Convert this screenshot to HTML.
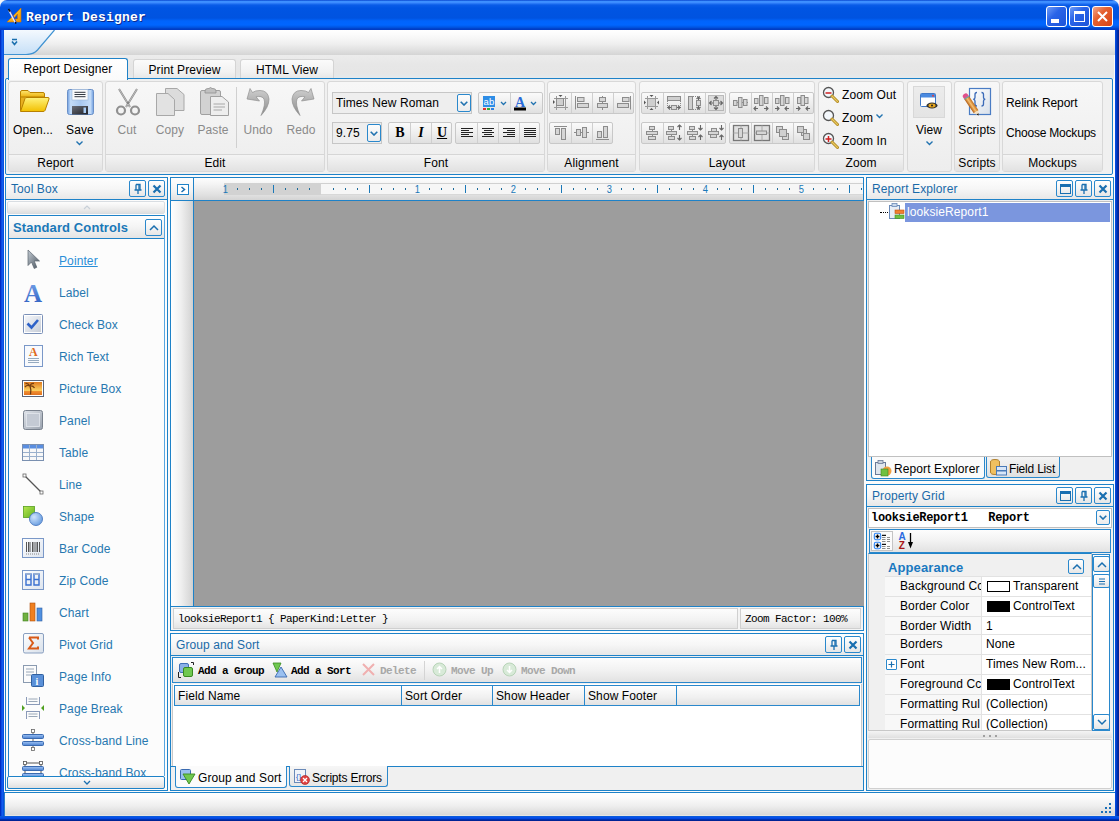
<!DOCTYPE html>
<html><head><meta charset="utf-8">
<style>
*{box-sizing:border-box;margin:0;padding:0}
html,body{width:1119px;height:821px;overflow:hidden}
body{position:relative;background:#0a4ad8;font-family:"Liberation Sans",sans-serif;font-size:12px;color:#000;letter-spacing:0.1px}
.a{position:absolute}
svg{display:block}
#title{left:0;top:0;width:1119px;height:30px;background:linear-gradient(#0846d0 0px,#3d90ff 1.5px,#3d8cff 2.5px,#0a5ce8 5px,#0055e3 8px,#0053e0 18px,#0064fc 21px,#0066ff 25px,#0052de 27.5px,#003cc4 29px,#003cc4 30px);border-radius:7px 7px 0 0}
#title .t{left:26px;top:10px;font-family:"Liberation Mono",monospace;font-weight:bold;font-size:13px;color:#fff;text-shadow:1px 1px 0 #0a2a90;white-space:nowrap;letter-spacing:0.2px}
.wb{top:6px;width:21px;height:21px;border:1px solid #fff;border-radius:3px;background:linear-gradient(135deg,#6f9cf7,#2a64e8 40%,#1d54d8)}
#qat{left:4px;top:30px;width:1111px;height:25px;background:linear-gradient(#ffffff,#fbfbfb 20%,#efefef 55%,#dcdcdc 88%,#d4d4d4)}
#tabrow{left:4px;top:55px;width:1110px;height:24px;background:linear-gradient(#ececec,#e7e7e7 40%,#e6e6e6 75%,#e4eaee)}
.tab{top:4px;height:20px;border:1px solid #d4d4d4;border-bottom:none;border-radius:3px 3px 0 0;background:linear-gradient(#fbfbfb,#f2f2f2 60%,#e6e6e6);text-align:center;line-height:21px;font-size:12px}
.tab.act{top:3px;height:22px;border-color:#1e82c8;background:linear-gradient(#ffffff,#fafafa);z-index:2}
#ribbon{left:5px;top:78px;width:1108px;height:97px;border:1px solid #1e82c8;border-radius:2px;background:#f0f0f0}
.grp{top:3px;height:90px;border:1px solid #d8d8d8;border-radius:3px;background:linear-gradient(#f7f7f7,#ededed)}
.grp .lbl{position:absolute;left:0;right:0;bottom:0;height:17px;border-top:1px solid #d6d6d6;background:linear-gradient(#f4f4f4,#e2e2e2);text-align:center;font-size:12px;line-height:17px;color:#000}
#status{left:4px;top:792px;width:1111px;height:24px;border-top:1px solid #1e82c8;border-left:1px solid #2a80c8;background:linear-gradient(#ffffff,#fbfbfb 20%,#efefef 55%,#d8d8d8 95%,#eeeeee)}
#main{left:4px;top:175px;width:1111px;height:617px;background:#f0f0f0}
.rt{font-size:12px;line-height:14px;white-space:nowrap}
.combo{border:1px solid #c6c6c6;background:#eeeeee}
.ddb{width:14px;height:18px;border:1px solid #2a88cc;border-radius:2px;background:linear-gradient(#fcfcfc,#ececec)}
.bseg{border:1px solid #c8c8c8;border-radius:2px;background:linear-gradient(#fafafa,#ececec 60%,#e0e0e0)}
.pnl{border:1px solid #1e82c8;background:#fcfcfc}
.phdr{background:linear-gradient(#fefefe,#f6f6f6 50%,#e6e6e6)}
.ptitle{font-size:12px;color:#1a6aa8;white-space:nowrap}
.hb{width:17px;height:17px;border:1px solid #2a88cc;border-radius:2px;background:linear-gradient(#fff,#f4f4f4 50%,#e6e6e6)}
.sbtn{border:1px solid #d8dde2;border-radius:2px;background:linear-gradient(#fdfdfd,#f0f0f0 50%,#e0e0e0)}
.ghdr{background:linear-gradient(#fefefe,#f4f4f4 50%,#e4e4e4)}
.tbi{font-size:12px;line-height:16px;color:#2778b0;white-space:nowrap}
.rlab{font-size:11px;line-height:12px;color:#1a78b8;width:9px;text-align:center;transform:scaleX(0.85)}
.sstrip{border:1px solid #d0d0d0;background:linear-gradient(#fdfdfd,#f2f2f2 60%,#e4e4e4)}
.mono{font-family:"Liberation Mono",monospace;font-size:11px;white-space:nowrap;letter-spacing:-0.6px}
.monob{font-family:"Liberation Mono",monospace;font-size:11px;font-weight:bold;white-space:nowrap;letter-spacing:-0.6px}
.gstb{border:1px solid #2a88cc;background:linear-gradient(#fdfdfd,#f2f2f2 50%,#e2e2e2)}
.gcol{border:1px solid #2a88cc;border-left:none;background:linear-gradient(#fefefe,#f0f0f0 60%,#e2e2e2);white-space:nowrap}
.btab{border:1px solid #2a88cc;border-top:none;border-radius:0 0 3px 3px;background:linear-gradient(#f6f6f6,#e6e6e6)}
.btab.act{background:#fbfbfb}

</style></head><body>
<div class="a" style="left:0;top:0;width:8px;height:8px;background:#f4f6fa"></div>
<div class="a" style="left:1111px;top:0;width:8px;height:8px;background:#f4f6fa"></div>
<div class="a" style="left:0;top:8px;width:4px;height:813px;background:linear-gradient(90deg,#0028b8 0,#0034d0 1px,#1664f4 2px,#0a56e6 3px,#0a4ad8 4px)"></div>
<div class="a" style="left:1115px;top:8px;width:4px;height:813px;background:linear-gradient(90deg,#0a50e0 0,#0044d8 1px,#0034b8 2px,#00289c 3px,#002090 4px)"></div>
<div class="a" style="left:0;top:816px;width:1119px;height:5px;background:linear-gradient(#0a64c8 0,#0a52ee 1px,#0048e0 2.5px,#0030b0 3.5px,#001c88 5px)"></div>
<div id="bgfill" class="a" style="left:4px;top:55px;width:1111px;height:737px;background:#fbfbfb"></div>
<div id="title" class="a">
  <svg class="a" style="left:0px;top:0px" width="24" height="24" viewBox="0 0 24 24">
<defs><linearGradient id="tig" x1="0" y1="0" x2="1" y2="1"><stop offset="0" stop-color="#ffe040"/><stop offset="1" stop-color="#f09000"/></linearGradient></defs>
<path d="M21 8 L7 22 L21 22 Z M17.5 14 L13.2 19 L17.5 19 Z" fill="url(#tig)" fill-rule="evenodd" stroke="#d07000" stroke-width="0.6"/>
<path d="M9 10 L15.5 22.5" stroke="#e8e8ff" stroke-width="1.8"/>
<path d="M10 10 L16.2 22" stroke="#2030a0" stroke-width="0.8"/>
<path d="M8.5 9 L10 11.5" stroke="#111" stroke-width="1.6"/>
<path d="M15.3 22 L16 23.6" stroke="#111" stroke-width="1.4"/>
</svg>
  <div class="a t">Report Designer</div>
  <div class="a wb" style="left:1046px"><div class="a" style="left:4px;top:12px;width:8px;height:4px;background:#fff"></div></div>
  <div class="a wb" style="left:1069px"><div class="a" style="left:4px;top:4px;width:11px;height:11px;border:1px solid #fff;border-top-width:3px"></div></div>
  <div class="a wb" style="left:1092px;background:linear-gradient(135deg,#f3a78c,#e4602f 40%,#d84416 100%)">
    <svg class="a" style="left:3px;top:3px" width="13" height="13" viewBox="0 0 13 13"><path d="M2 2 L11 11 M11 2 L2 11" stroke="#fff" stroke-width="2"/></svg>
  </div>
</div>
<div id="qat" class="a">
  <svg class="a" style="left:0;top:0" width="60" height="25" viewBox="0 0 60 25">
    <defs><linearGradient id="qg" x1="0" y1="0" x2="0" y2="1"><stop offset="0" stop-color="#f4f9fe"/><stop offset="1" stop-color="#c6dff7"/></linearGradient></defs>
    <path d="M0 0 L50 0 L33 20 Q29 24.5 22 24.5 L0 24.5 Z" fill="url(#qg)"/>
    <path d="M50.5 0 L33.5 20 Q29.5 24.5 22 24.5 L0 24.5" fill="none" stroke="#3f92d2" stroke-width="1.2"/>
    <path d="M8 9.5 L13 9.5 M8 11.5 L10.5 14.5 L13 11.5" fill="none" stroke="#1a6fae" stroke-width="1.6"/>
  </svg>
</div>
<div id="tabrow" class="a">
  <div class="a tab act" style="left:4px;width:120px">Report Designer</div>
  <div class="a tab" style="left:129px;width:103px">Print Preview</div>
  <div class="a tab" style="left:236px;width:94px">HTML View</div>
</div>
<div id="ribbon" class="a"></div>
<div class="a grp" style="left:8px;top:81px;width:95px;height:91px">
<div class="lbl">Report</div>
</div>
<div class="a grp" style="left:105px;top:81px;width:220px;height:91px">
<div class="lbl">Edit</div>
</div>
<div class="a grp" style="left:327px;top:81px;width:218px;height:91px">
<div class="lbl">Font</div>
</div>
<div class="a grp" style="left:547px;top:81px;width:89px;height:91px">
<div class="lbl">Alignment</div>
</div>
<div class="a grp" style="left:639px;top:81px;width:176px;height:91px">
<div class="lbl">Layout</div>
</div>
<div class="a grp" style="left:818px;top:81px;width:86px;height:91px">
<div class="lbl">Zoom</div>
</div>
<div class="a grp" style="left:907px;top:81px;width:45px;height:91px">
</div>
<div class="a grp" style="left:954px;top:81px;width:46px;height:91px">
<div class="lbl">Scripts</div>
</div>
<div class="a grp" style="left:1002px;top:81px;width:101px;height:91px">
<div class="lbl">Mockups</div>
</div>
<svg class="a" style="left:19px;top:89px" width="31" height="24" viewBox="0 0 31 24">
<defs><linearGradient id="fo1" x1="0" y1="0" x2="0" y2="1"><stop offset="0" stop-color="#ffe870"/><stop offset="1" stop-color="#e8a800"/></linearGradient>
<linearGradient id="fo2" x1="0" y1="0" x2="0" y2="1"><stop offset="0" stop-color="#fff27a"/><stop offset="1" stop-color="#f2c000"/></linearGradient></defs>
<path d="M1.5 3 Q1.5 1.5 3 1.5 L9 1.5 L11 3.5 L24 3.5 Q25.5 3.5 25.5 5 L25.5 9 L1.5 9 Z" fill="url(#fo1)" stroke="#b88000" stroke-width="1"/>
<path d="M1.5 21.5 L1.5 8 L25 8 L25 21.5 Z" fill="#e8b020" stroke="#b88000"/>
<path d="M1.5 22.5 L6 9.5 Q6.5 8.5 8 8.5 L29 8.5 Q30.5 8.5 30 10 L26 21.5 Q25.5 22.5 24 22.5 Z" fill="url(#fo2)" stroke="#b88000" stroke-width="1"/>
</svg>
<svg class="a" style="left:67px;top:89px" width="27" height="26" viewBox="0 0 27 26">
<defs><linearGradient id="fl1" x1="0" y1="0" x2="1" y2="0"><stop offset="0" stop-color="#6f9ee0"/><stop offset="0.12" stop-color="#c4dcf8"/><stop offset="0.5" stop-color="#a8c8f0"/><stop offset="0.88" stop-color="#c4dcf8"/><stop offset="1" stop-color="#6f9ee0"/></linearGradient>
<linearGradient id="fl2" x1="0" y1="0" x2="1" y2="1"><stop offset="0" stop-color="#6a6e78"/><stop offset="1" stop-color="#1e2026"/></linearGradient></defs>
<rect x="0.5" y="0.5" width="26" height="25" rx="2" fill="url(#fl1)" stroke="#6a90c8"/>
<rect x="5" y="0.5" width="16" height="10.5" fill="#fafafa" stroke="#9ab4d8" stroke-width="0.6"/>
<path d="M7.5 3.3 H18.5 M7.5 5.5 H18.5 M7.5 7.7 H18.5" stroke="#333840" stroke-width="1"/>
<rect x="5" y="17" width="16" height="8.5" fill="url(#fl2)"/>
<rect x="16.5" y="18.5" width="2.5" height="5.5" fill="#a8ccf4"/>
</svg>
<div class="a rt" style="left:-17px;top:123px;width:100px;text-align:center;">Open...</div>
<div class="a rt" style="left:30px;top:123px;width:100px;text-align:center;">Save</div>
<svg class="a" style="left:76px;top:141px" width="7" height="5" viewBox="0 0 7 5"><path d="M0.5 0.5 L3.5 3.5 L6.5 0.5" fill="none" stroke="#2273b0" stroke-width="1.4"/></svg>
<svg class="a" style="left:115px;top:88px" width="26" height="28" viewBox="0 0 26 28">
<path d="M4 1 L15 19 M22 1 L11 19" stroke="#8a8a8a" stroke-width="2"/>
<path d="M4 1 L15 19 M22 1 L11 19" stroke="#c8c8c8" stroke-width="0.8"/>
<circle cx="6" cy="22.5" r="4" fill="none" stroke="#909090" stroke-width="2.2"/>
<circle cx="20" cy="22.5" r="4" fill="none" stroke="#909090" stroke-width="2.2"/>
<circle cx="13" cy="15" r="1" fill="#777"/>
</svg>
<svg class="a" style="left:156px;top:88px" width="29" height="28" viewBox="0 0 29 28">
<path d="M9.5 0.5 H21 L28 6.5 V22.5 H9.5 Z" fill="#dcdcdc" stroke="#a8a8a8"/>
<path d="M0.5 5.5 H12 L18.5 11.5 V27.5 H0.5 Z" fill="#e2e2e2" stroke="#a8a8a8"/>
</svg>
<svg class="a" style="left:200px;top:86px" width="29" height="30" viewBox="0 0 29 30">
<rect x="0.5" y="4.5" width="20" height="24" rx="1.5" fill="#d2d2d2" stroke="#a0a0a0"/>
<path d="M5 5 Q5 2.5 8 2.5 L9 2.5 Q10.5 0.5 12 2.5 L13 2.5 Q16 2.5 16 5 L16 7 L5 7 Z" fill="#c0c0c0" stroke="#909090" stroke-width="0.8"/>
<path d="M10.5 10.5 H22 L28.5 16 V29.5 H10.5 Z" fill="#eeeeee" stroke="#a0a0a0"/>
<path d="M13.5 18 H25 M13.5 21 H25 M13.5 24 H22" stroke="#a8a8a8" stroke-width="1"/>
</svg>
<div class="a" style="left:236px;top:87px;width:1px;height:61px;background:#d0d0d0"></div>
<svg class="a" style="left:246px;top:88px" width="25" height="28" viewBox="0 0 25 28">
<defs><linearGradient id="ug" x1="0" y1="0" x2="0" y2="1"><stop offset="0" stop-color="#d0d0d0"/><stop offset="1" stop-color="#8a8a8a"/></linearGradient></defs>
<path d="M4 0.5 L1 11 L13.5 13 L10 8.8 Q16 7.5 18 11 Q20 16 15 27.5 Q23 19 23 11 Q22 2.5 14 2.5 Q9 2.5 6.5 4.5 Z" fill="url(#ug)" stroke="#909090" stroke-width="0.7"/>
</svg>
<svg class="a" style="left:290px;top:88px" width="25" height="28" viewBox="0 0 25 28">
<path d="M 21 0.5 L 24 11 L 11.5 13 L 15 8.8 Q 9 7.5 7 11 Q 5 16 10 27.5 Q 2 19 2 11 Q 3 2.5 11 2.5 Q 16 2.5 18.5 4.5 Z" fill="url(#ug)" stroke="#909090" stroke-width="0.7"/>
</svg>
<div class="a rt" style="left:77px;top:123px;width:100px;text-align:center;color:#8a8a8a">Cut</div>
<div class="a rt" style="left:120px;top:123px;width:100px;text-align:center;color:#8a8a8a">Copy</div>
<div class="a rt" style="left:163px;top:123px;width:100px;text-align:center;color:#8a8a8a">Paste</div>
<div class="a rt" style="left:208px;top:123px;width:100px;text-align:center;color:#8a8a8a">Undo</div>
<div class="a rt" style="left:251px;top:123px;width:100px;text-align:center;color:#8a8a8a">Redo</div>
<div class="a combo" style="left:332px;top:92px;width:140px;height:22px"><span class="a" style="left:3px;top:3px;font-size:12px">Times New Roman</span><div class="a ddb" style="left:124px;top:1px"><svg class="a" style="left:2px;top:6px" width="8" height="5" viewBox="0 0 8 5"><path d="M0.7 0.7 L4 4 L7.3 0.7" fill="none" stroke="#2273b0" stroke-width="1.6"/></svg></div></div>
<div class="a combo" style="left:332px;top:122px;width:50px;height:22px"><span class="a" style="left:3px;top:3px;font-size:12px">9.75</span><div class="a ddb" style="left:34px;top:1px"><svg class="a" style="left:2px;top:6px" width="8" height="5" viewBox="0 0 8 5"><path d="M0.7 0.7 L4 4 L7.3 0.7" fill="none" stroke="#2273b0" stroke-width="1.6"/></svg></div></div>
<div class="a bseg" style="left:388px;top:122px;width:64px;height:22px">
<div class="a" style="left:1px;top:0;width:20px;height:20px"><div class="a" style="left:0;top:1px;width:20px;text-align:center;font-family:'Liberation Serif',serif;font-weight:bold;font-size:14px;line-height:18px">B</div></div>
<div class="a" style="left:21px;top:0;width:1px;height:20px;background:#cfcfcf"></div>
<div class="a" style="left:22px;top:0;width:20px;height:20px"><div class="a" style="left:0;top:1px;width:20px;text-align:center;font-family:'Liberation Serif',serif;font-weight:bold;font-style:italic;font-size:14px;line-height:18px">I</div></div>
<div class="a" style="left:42px;top:0;width:1px;height:20px;background:#cfcfcf"></div>
<div class="a" style="left:43px;top:0;width:20px;height:20px"><div class="a" style="left:0;top:1px;width:20px;text-align:center;font-family:'Liberation Serif',serif;font-weight:bold;text-decoration:underline;font-size:14px;line-height:18px">U</div></div>
</div>
<div class="a bseg" style="left:455px;top:122px;width:85px;height:22px">
<div class="a" style="left:1px;top:0;width:20px;height:20px"><svg class="a" style="left:0;top:0" width="20" height="20" viewBox="0 0 20 20"><path d="M4 5.5 H16 M4 7.5 H12 M4 9.5 H16 M4 11.5 H12 M4 13.5 H16" stroke="#222" stroke-width="1.2"/></svg></div>
<div class="a" style="left:21px;top:0;width:1px;height:20px;background:#cfcfcf"></div>
<div class="a" style="left:22px;top:0;width:20px;height:20px"><svg class="a" style="left:0;top:0" width="20" height="20" viewBox="0 0 20 20"><path d="M4 5.5 H16 M6 7.5 H14 M4 9.5 H16 M6 11.5 H14 M4 13.5 H16" stroke="#222" stroke-width="1.2"/></svg></div>
<div class="a" style="left:42px;top:0;width:1px;height:20px;background:#cfcfcf"></div>
<div class="a" style="left:43px;top:0;width:20px;height:20px"><svg class="a" style="left:0;top:0" width="20" height="20" viewBox="0 0 20 20"><path d="M4 5.5 H16 M8 7.5 H16 M4 9.5 H16 M8 11.5 H16 M4 13.5 H16" stroke="#222" stroke-width="1.2"/></svg></div>
<div class="a" style="left:63px;top:0;width:1px;height:20px;background:#cfcfcf"></div>
<div class="a" style="left:64px;top:0;width:20px;height:20px"><svg class="a" style="left:0;top:0" width="20" height="20" viewBox="0 0 20 20"><path d="M4 5.5 H16 M4 7.5 H16 M4 9.5 H16 M4 11.5 H16 M4 13.5 H16" stroke="#222" stroke-width="1.2"/></svg></div>
</div>
<div class="a bseg" style="left:478px;top:92px;width:65px;height:22px"><div class="a" style="left:31px;top:0;width:1px;height:20px;background:#cfcfcf"></div><svg class="a" style="left:3px;top:2px" width="28" height="17" viewBox="0 0 28 17"><rect x="1" y="1" width="12" height="11" fill="#2e8de6"/><text x="7" y="9.5" text-anchor="middle" font-family="Liberation Sans" font-size="9.5" fill="#fff">ab</text><rect x="1" y="13" width="3" height="2" fill="#e03030"/><rect x="5" y="13" width="3" height="2" fill="#30b030"/><rect x="9" y="13" width="3" height="2" fill="#3080e0"/><path d="M19 7 L21.5 9.5 L24 7" fill="none" stroke="#2273b0" stroke-width="1.3"/></svg><svg class="a" style="left:34px;top:2px" width="28" height="17" viewBox="0 0 28 17"><text x="7" y="11.5" text-anchor="middle" font-family="Liberation Serif" font-weight="bold" font-size="14" fill="#2a6ad8">A</text><rect x="1" y="12.5" width="12" height="3" fill="#000"/><path d="M18 7 L20.5 9.5 L23 7" fill="none" stroke="#2273b0" stroke-width="1.3"/></svg></div>
<div class="a bseg" style="left:549px;top:92px;width:85px;height:22px">
<div class="a" style="left:1px;top:0;width:20px;height:20px"><svg class="a" style="left:0;top:0" width="20" height="20" viewBox="0 0 20 20"><g fill="#d6d6d6" stroke="#8c8c8c" stroke-width="1"><path d="M3 5.5 H17 M3 14.5 H17 M5.5 3 V17 M14.5 3 V17" fill="none" stroke="#9a9a9a"/><rect x="5.5" y="5.5" width="7" height="7" fill="#cfcfcf"/><path d="M7.5 2 L11.5 2 L9.5 4 Z" fill="#555" stroke="none"/><path d="M2 7 L2 11 L4 9 Z" fill="#555" stroke="none"/></g></svg></div>
<div class="a" style="left:21px;top:0;width:1px;height:20px;background:#cfcfcf"></div>
<div class="a" style="left:22px;top:0;width:20px;height:20px"><svg class="a" style="left:0;top:0" width="20" height="20" viewBox="0 0 20 20"><g fill="#d6d6d6" stroke="#8c8c8c" stroke-width="1"><path d="M3.5 3 V16.5" fill="none"/><rect x="5.5" y="4.5" width="6.5" height="4"/><rect x="5.5" y="10.5" width="11" height="4"/></g></svg></div>
<div class="a" style="left:42px;top:0;width:1px;height:20px;background:#cfcfcf"></div>
<div class="a" style="left:43px;top:0;width:20px;height:20px"><svg class="a" style="left:0;top:0" width="20" height="20" viewBox="0 0 20 20"><g fill="#d6d6d6" stroke="#8c8c8c" stroke-width="1"><path d="M9.5 3 V17" fill="none"/><rect x="6.5" y="4.5" width="6" height="4"/><rect x="4.5" y="10.5" width="10" height="4"/></g></svg></div>
<div class="a" style="left:63px;top:0;width:1px;height:20px;background:#cfcfcf"></div>
<div class="a" style="left:64px;top:0;width:20px;height:20px"><svg class="a" style="left:0;top:0" width="20" height="20" viewBox="0 0 20 20"><g fill="#d6d6d6" stroke="#8c8c8c" stroke-width="1"><path d="M16.5 3 V16.5" fill="none"/><rect x="8.5" y="4.5" width="6.5" height="4"/><rect x="3.5" y="10.5" width="11" height="4"/></g></svg></div>
</div>
<div class="a bseg" style="left:549px;top:122px;width:64px;height:22px">
<div class="a" style="left:1px;top:0;width:20px;height:20px"><svg class="a" style="left:0;top:0" width="20" height="20" viewBox="0 0 20 20"><g fill="#d6d6d6" stroke="#8c8c8c" stroke-width="1"><path d="M3 3.5 H16" fill="none"/><rect x="4.5" y="5.5" width="4" height="6"/><rect x="10.5" y="5.5" width="4" height="11"/></g></svg></div>
<div class="a" style="left:21px;top:0;width:1px;height:20px;background:#cfcfcf"></div>
<div class="a" style="left:22px;top:0;width:20px;height:20px"><svg class="a" style="left:0;top:0" width="20" height="20" viewBox="0 0 20 20"><g fill="#d6d6d6" stroke="#8c8c8c" stroke-width="1"><path d="M2 9.5 H17" fill="none"/><rect x="4.5" y="6.5" width="4" height="6"/><rect x="10.5" y="4.5" width="4" height="10"/></g></svg></div>
<div class="a" style="left:42px;top:0;width:1px;height:20px;background:#cfcfcf"></div>
<div class="a" style="left:43px;top:0;width:20px;height:20px"><svg class="a" style="left:0;top:0" width="20" height="20" viewBox="0 0 20 20"><g fill="#d6d6d6" stroke="#8c8c8c" stroke-width="1"><path d="M3 16.5 H16" fill="none"/><rect x="4.5" y="8.5" width="4" height="6"/><rect x="10.5" y="3.5" width="4" height="11"/></g></svg></div>
</div>
<div class="a bseg" style="left:641px;top:92px;width:85px;height:22px">
<div class="a" style="left:1px;top:0;width:20px;height:20px"><svg class="a" style="left:0;top:0" width="20" height="20" viewBox="0 0 20 20"><g fill="#d6d6d6" stroke="#8c8c8c" stroke-width="1"><path d="M2 5.5 H15 M2 13.5 H15 M4.5 3 V16 M12.5 3 V16" fill="none" stroke="#9a9a9a"/><rect x="5" y="6" width="7" height="7" fill="#cfcfcf" stroke="none"/><path d="M6.5 2 L10.5 2 L8.5 4 Z" fill="#555" stroke="none"/><path d="M6.5 17 L10.5 17 L8.5 15 Z" fill="#555" stroke="none"/><path d="M1 7.5 L1 11.5 L3 9.5 Z" fill="#555" stroke="none"/><path d="M16 7.5 L16 11.5 L14 9.5 Z" fill="#555" stroke="none"/></g></svg></div>
<div class="a" style="left:21px;top:0;width:1px;height:20px;background:#cfcfcf"></div>
<div class="a" style="left:22px;top:0;width:20px;height:20px"><svg class="a" style="left:0;top:0" width="20" height="20" viewBox="0 0 20 20"><g fill="#d6d6d6" stroke="#8c8c8c" stroke-width="1"><rect x="3.5" y="3.5" width="13" height="4" fill="#cfcfcf"/><path d="M3.5 8 V15 M16.5 8 V15" fill="none" stroke="#8a8a8a" stroke-dasharray="1 1"/><rect x="7.5" y="12.5" width="5" height="4"/><path d="M7 14.5 H4 M6 12.5 L4 14.5 L6 16.5" fill="none" stroke="#666" stroke-width="1.1"/><path d="M13 14.5 H16 M14 12.5 L16 14.5 L14 16.5" fill="none" stroke="#666" stroke-width="1.1"/></g></svg></div>
<div class="a" style="left:42px;top:0;width:1px;height:20px;background:#cfcfcf"></div>
<div class="a" style="left:43px;top:0;width:20px;height:20px"><svg class="a" style="left:0;top:0" width="20" height="20" viewBox="0 0 20 20"><g fill="#d6d6d6" stroke="#8c8c8c" stroke-width="1"><rect x="3.5" y="3.5" width="4" height="13" fill="#cfcfcf"/><path d="M8 3.5 H15 M8 16.5 H15" fill="none" stroke="#8a8a8a" stroke-dasharray="1 1"/><rect x="11.5" y="7.5" width="4" height="5"/><path d="M13.5 7 V4 M11.5 6 L13.5 4 L15.5 6" fill="none" stroke="#666" stroke-width="1.1"/><path d="M13.5 13 V16 M11.5 14 L13.5 16 L15.5 14" fill="none" stroke="#666" stroke-width="1.1"/></g></svg></div>
<div class="a" style="left:63px;top:0;width:1px;height:20px;background:#cfcfcf"></div>
<div class="a" style="left:64px;top:0;width:20px;height:20px"><svg class="a" style="left:0;top:0" width="20" height="20" viewBox="0 0 20 20"><g fill="#d6d6d6" stroke="#8c8c8c" stroke-width="1"><rect x="2.5" y="2.5" width="15" height="15" fill="#dcdcdc" fill="none" stroke="#8a8a8a" stroke-dasharray="1 1"/><rect x="7.5" y="7.5" width="5" height="5"/><path d="M10 7 V3.5 M8 5.5 L10 3.5 L12 5.5" fill="none" stroke="#666" stroke-width="1.1"/><path d="M10 13 V16.5 M8 14.5 L10 16.5 L12 14.5" fill="none" stroke="#666" stroke-width="1.1"/><path d="M7 10 H3.5 M5.5 8 L3.5 10 L5.5 12" fill="none" stroke="#666" stroke-width="1.1"/><path d="M13 10 H16.5 M14.5 8 L16.5 10 L14.5 12" fill="none" stroke="#666" stroke-width="1.1"/></g></svg></div>
</div>
<div class="a bseg" style="left:729px;top:92px;width:85px;height:22px">
<div class="a" style="left:1px;top:0;width:20px;height:20px"><svg class="a" style="left:0;top:0" width="20" height="20" viewBox="0 0 20 20"><g fill="#d6d6d6" stroke="#8c8c8c" stroke-width="1"><path d="M2 9.5 H17" fill="none"/><rect x="2.5" y="7.5" width="3.5" height="5"/><rect x="7.5" y="4.5" width="3.5" height="10"/><rect x="12.5" y="6.5" width="3.5" height="6"/></g></svg></div>
<div class="a" style="left:21px;top:0;width:1px;height:20px;background:#cfcfcf"></div>
<div class="a" style="left:22px;top:0;width:20px;height:20px"><svg class="a" style="left:0;top:0" width="20" height="20" viewBox="0 0 20 20"><g fill="#d6d6d6" stroke="#8c8c8c" stroke-width="1"><rect x="2.5" y="5.5" width="3.5" height="5"/><rect x="7.5" y="2.5" width="3.5" height="10"/><rect x="12.5" y="4.5" width="3.5" height="6"/><path d="M6 15.5 H2 M4 13.5 L2 15.5 L4 17.5" fill="none" stroke="#666" stroke-width="1.1"/><path d="M12 15.5 H16 M14 13.5 L16 15.5 L14 17.5" fill="none" stroke="#666" stroke-width="1.1"/></g></svg></div>
<div class="a" style="left:42px;top:0;width:1px;height:20px;background:#cfcfcf"></div>
<div class="a" style="left:43px;top:0;width:20px;height:20px"><svg class="a" style="left:0;top:0" width="20" height="20" viewBox="0 0 20 20"><g fill="#d6d6d6" stroke="#8c8c8c" stroke-width="1"><rect x="2.5" y="5.5" width="3.5" height="5"/><rect x="7.5" y="2.5" width="3.5" height="10"/><rect x="12.5" y="4.5" width="3.5" height="6"/><path d="M2 15.5 H6 M4 13.5 L6 15.5 L4 17.5" fill="none" stroke="#666" stroke-width="1.1"/><path d="M16 15.5 H12 M14 13.5 L12 15.5 L14 17.5" fill="none" stroke="#666" stroke-width="1.1"/></g></svg></div>
<div class="a" style="left:63px;top:0;width:1px;height:20px;background:#cfcfcf"></div>
<div class="a" style="left:64px;top:0;width:20px;height:20px"><svg class="a" style="left:0;top:0" width="20" height="20" viewBox="0 0 20 20"><g fill="#d6d6d6" stroke="#8c8c8c" stroke-width="1"><rect x="3.5" y="4.5" width="3.5" height="6"/><rect x="7" y="2.5" width="3.5" height="10"/><rect x="10.5" y="4.5" width="3.5" height="6"/><path d="M2 15.5 H6 M4 13.5 L6 15.5 L4 17.5" fill="none" stroke="#666" stroke-width="1.1"/><path d="M16 15.5 H12 M14 13.5 L12 15.5 L14 17.5" fill="none" stroke="#666" stroke-width="1.1"/></g></svg></div>
</div>
<div class="a bseg" style="left:641px;top:122px;width:85px;height:22px">
<div class="a" style="left:1px;top:0;width:20px;height:20px"><svg class="a" style="left:0;top:0" width="20" height="20" viewBox="0 0 20 20"><g fill="#d6d6d6" stroke="#8c8c8c" stroke-width="1"><path d="M9.5 6.5 V13" fill="none"/><rect x="6.5" y="3.5" width="5" height="3"/><rect x="3.5" y="8.5" width="11" height="3"/><rect x="5.5" y="13.5" width="7" height="3"/></g></svg></div>
<div class="a" style="left:21px;top:0;width:1px;height:20px;background:#cfcfcf"></div>
<div class="a" style="left:22px;top:0;width:20px;height:20px"><svg class="a" style="left:0;top:0" width="20" height="20" viewBox="0 0 20 20"><g fill="#d6d6d6" stroke="#8c8c8c" stroke-width="1"><path d="M7.5 6.5 V13" fill="none"/><rect x="4.5" y="3.5" width="5" height="3"/><rect x="2.5" y="8.5" width="10" height="3"/><rect x="4.5" y="13.5" width="6" height="3"/><path d="M15.5 7 V2 M13.5 4 L15.5 2 L17.5 4" fill="none" stroke="#666" stroke-width="1.1"/><path d="M15.5 12 V17 M13.5 15 L15.5 17 L17.5 15" fill="none" stroke="#666" stroke-width="1.1"/></g></svg></div>
<div class="a" style="left:42px;top:0;width:1px;height:20px;background:#cfcfcf"></div>
<div class="a" style="left:43px;top:0;width:20px;height:20px"><svg class="a" style="left:0;top:0" width="20" height="20" viewBox="0 0 20 20"><g fill="#d6d6d6" stroke="#8c8c8c" stroke-width="1"><path d="M7.5 6.5 V13" fill="none"/><rect x="4.5" y="3.5" width="5" height="3"/><rect x="2.5" y="8.5" width="10" height="3"/><rect x="4.5" y="13.5" width="6" height="3"/><path d="M15.5 2 V7 M13.5 5 L15.5 7 L17.5 5" fill="none" stroke="#666" stroke-width="1.1"/><path d="M15.5 17 V12 M13.5 14 L15.5 12 L17.5 14" fill="none" stroke="#666" stroke-width="1.1"/></g></svg></div>
<div class="a" style="left:63px;top:0;width:1px;height:20px;background:#cfcfcf"></div>
<div class="a" style="left:64px;top:0;width:20px;height:20px"><svg class="a" style="left:0;top:0" width="20" height="20" viewBox="0 0 20 20"><g fill="#d6d6d6" stroke="#8c8c8c" stroke-width="1"><rect x="5.5" y="5.5" width="5" height="3"/><rect x="2.5" y="8.5" width="10" height="3"/><rect x="4.5" y="11.5" width="6" height="3"/><path d="M15.5 2 V7 M13.5 5 L15.5 7 L17.5 5" fill="none" stroke="#666" stroke-width="1.1"/><path d="M15.5 17 V12 M13.5 14 L15.5 12 L17.5 14" fill="none" stroke="#666" stroke-width="1.1"/></g></svg></div>
</div>
<div class="a bseg" style="left:729px;top:122px;width:85px;height:22px">
<div class="a" style="left:1px;top:0;width:20px;height:20px"><svg class="a" style="left:0;top:0" width="20" height="20" viewBox="0 0 20 20"><g fill="#d6d6d6" stroke="#8c8c8c" stroke-width="1"><rect x="2.5" y="2.5" width="15" height="15" fill="#e0e0e0" stroke="#777" stroke-width="1.3"/><path d="M2.5 10 H17.5 M10 2.5 V17.5" fill="none" stroke="#aaa"/><rect x="7.5" y="5.5" width="4" height="9"/></g></svg></div>
<div class="a" style="left:21px;top:0;width:1px;height:20px;background:#cfcfcf"></div>
<div class="a" style="left:22px;top:0;width:20px;height:20px"><svg class="a" style="left:0;top:0" width="20" height="20" viewBox="0 0 20 20"><g fill="#d6d6d6" stroke="#8c8c8c" stroke-width="1"><rect x="2.5" y="2.5" width="15" height="15" fill="#e0e0e0" stroke="#777" stroke-width="1.3"/><path d="M2.5 10 H17.5 M10 2.5 V17.5" fill="none" stroke="#aaa"/><rect x="4.5" y="8" width="10" height="3.5"/></g></svg></div>
<div class="a" style="left:42px;top:0;width:1px;height:20px;background:#cfcfcf"></div>
<div class="a" style="left:43px;top:0;width:20px;height:20px"><svg class="a" style="left:0;top:0" width="20" height="20" viewBox="0 0 20 20"><g fill="#d6d6d6" stroke="#8c8c8c" stroke-width="1"><rect x="3.5" y="3.5" width="6" height="6"/><rect x="9.5" y="10.5" width="6" height="6"/><rect x="6.5" y="6.5" width="7" height="7" fill="#d0d0d0"/></g></svg></div>
<div class="a" style="left:63px;top:0;width:1px;height:20px;background:#cfcfcf"></div>
<div class="a" style="left:64px;top:0;width:20px;height:20px"><svg class="a" style="left:0;top:0" width="20" height="20" viewBox="0 0 20 20"><g fill="#d6d6d6" stroke="#8c8c8c" stroke-width="1"><rect x="7.5" y="6.5" width="5" height="6"/><rect x="3.5" y="3.5" width="6" height="6" fill="#d0d0d0"/><rect x="9.5" y="10.5" width="6" height="6" fill="#d0d0d0"/></g></svg></div>
</div>
<div class="a" style="left:822px;top:86px"><svg width="17" height="17" viewBox="0 0 17 17"><circle cx="6.5" cy="6.5" r="5" fill="#f4f8fc" stroke="#555" stroke-width="1.3"/><path d="M3.5 7 H9.5" stroke="#d02020" stroke-width="1.5"/><path d="M10 10 L15.5 15.5" stroke="#b08820" stroke-width="3" stroke-linecap="round"/><path d="M10 10 L15.5 15.5" stroke="#e8c860" stroke-width="1.2" stroke-linecap="round"/></svg></div>
<div class="a" style="left:822px;top:109px"><svg width="17" height="17" viewBox="0 0 17 17"><circle cx="6.5" cy="6.5" r="5" fill="#f4f8fc" stroke="#555" stroke-width="1.3"/><path d="M10 10 L15.5 15.5" stroke="#b08820" stroke-width="3" stroke-linecap="round"/><path d="M10 10 L15.5 15.5" stroke="#e8c860" stroke-width="1.2" stroke-linecap="round"/></svg></div>
<div class="a" style="left:822px;top:132px"><svg width="17" height="17" viewBox="0 0 17 17"><circle cx="6.5" cy="6.5" r="5" fill="#f4f8fc" stroke="#555" stroke-width="1.3"/><path d="M3.5 7 H9.5 M6.5 4 V10" stroke="#d02020" stroke-width="1.5"/><path d="M10 10 L15.5 15.5" stroke="#b08820" stroke-width="3" stroke-linecap="round"/><path d="M10 10 L15.5 15.5" stroke="#e8c860" stroke-width="1.2" stroke-linecap="round"/></svg></div>
<div class="a rt" style="left:842px;top:88px;">Zoom Out</div>
<div class="a rt" style="left:842px;top:111px;">Zoom</div>
<div class="a rt" style="left:842px;top:134px;">Zoom In</div>
<svg class="a" style="left:876px;top:114px" width="7" height="5" viewBox="0 0 7 5"><path d="M0.5 0.5 L3.5 3.5 L6.5 0.5" fill="none" stroke="#2273b0" stroke-width="1.4"/></svg>
<div class="a" style="left:913px;top:86px;width:32px;height:32px;border:1px solid #d8d8d8;background:linear-gradient(#ececec,#e4e4e4)"></div>
<svg class="a" style="left:920px;top:93px" width="18" height="17" viewBox="0 0 18 17">
<rect x="0.5" y="0.5" width="15" height="13" rx="1" fill="#fff" stroke="#3f78c8"/><rect x="1" y="1" width="14" height="3.5" fill="#4a8ae0"/><circle cx="13" cy="2.7" r="1" fill="#e04040"/>
<ellipse cx="12" cy="12.5" rx="5.5" ry="3" fill="#333"/><ellipse cx="12" cy="12.5" rx="3.5" ry="2" fill="#e8a820"/><circle cx="12" cy="12.5" r="1" fill="#222"/>
</svg>
<div class="a rt" style="left:879px;top:123px;width:100px;text-align:center;">View</div>
<svg class="a" style="left:926px;top:141px" width="7" height="5" viewBox="0 0 7 5"><path d="M0.5 0.5 L3.5 3.5 L6.5 0.5" fill="none" stroke="#2273b0" stroke-width="1.4"/></svg>
<svg class="a" style="left:962px;top:86px" width="30" height="32" viewBox="0 0 30 32">
<defs><linearGradient id="sdoc" x1="0" y1="0" x2="1" y2="1"><stop offset="0" stop-color="#ffffff"/><stop offset="1" stop-color="#d8e0ea"/></linearGradient>
<linearGradient id="spen" x1="0" y1="0" x2="1" y2="0"><stop offset="0" stop-color="#b05a10"/><stop offset="0.5" stop-color="#f8c070"/><stop offset="1" stop-color="#c06a18"/></linearGradient></defs>
<rect x="7.5" y="2.5" width="21" height="26" fill="url(#sdoc)" stroke="#4a7cc4" stroke-width="1.2"/>
<path d="M15 6.5 Q13 6.5 13 8.5 L13 11.5 Q13 13 11.3 13.3 Q13 13.6 13 15 L13 18 Q13 20 15 20" fill="none" stroke="#3a6ab8" stroke-width="1.3"/>
<path d="M19.5 6.5 Q21.5 6.5 21.5 8.5 L21.5 11.5 Q21.5 13 23.2 13.3 Q21.5 13.6 21.5 15 L21.5 18 Q21.5 20 19.5 20" fill="none" stroke="#3a6ab8" stroke-width="1.3"/>
<g transform="translate(3.5 10) rotate(-34)">
<rect x="-2.8" y="2" width="5.6" height="17" fill="url(#spen)"/>
<path d="M-2.8 0 Q-2.8 -2.5 0 -2.5 Q2.8 -2.5 2.8 0 L2.8 2 L-2.8 2 Z" fill="#e0508a"/>
<rect x="-2.8" y="1.5" width="5.6" height="1.2" fill="#70a0a0"/>
<path d="M-2.8 19 L0 23.5 L2.8 19 Z" fill="#f4e0c0"/>
<path d="M-1.2 21.5 L0 23.5 L1.2 21.5 Z" fill="#111"/>
</g>
</svg>
<div class="a rt" style="left:927px;top:123px;width:100px;text-align:center;">Scripts</div>
<div class="a rt" style="left:1006px;top:96px;letter-spacing:-0.1px">Relink Report</div>
<div class="a rt" style="left:1006px;top:126px;letter-spacing:-0.2px">Choose Mockups</div><div class="a" style="left:4px;top:175px;width:1110px;height:617px;background:#fbfbfb"></div>
<div class="a pnl" style="left:5px;top:177px;width:163px;height:614px"></div>
<div class="a phdr" style="left:6px;top:178px;width:161px;height:22px"><span class="a ptitle" style="left:5px;top:4px">Tool Box</span></div>
<div class="a hb" style="left:129px;top:180px"><svg class="a" style="left:2px;top:2px" width="12" height="12" viewBox="0 0 12 12"><path d="M4 1.5 H8 V6.5 M4 1.5 V6.5 M2.5 7 H9.5 M6 7.5 V11" fill="none" stroke="#1a6fb0" stroke-width="1.3"/><path d="M7 1.5 V6.5" stroke="#1a6fb0" stroke-width="1.3"/></svg></div>
<div class="a hb" style="left:148px;top:180px"><svg class="a" style="left:3px;top:3px" width="10" height="10" viewBox="0 0 10 10"><path d="M1.5 1.5 L8.5 8.5 M8.5 1.5 L1.5 8.5" stroke="#1a6fb0" stroke-width="2.2"/></svg></div>
<div class="a" style="left:6px;top:199px;width:161px;height:1px;background:#1e82c8"></div>
<div class="a sbtn" style="left:7px;top:201px;width:158px;height:13px"><svg class="a" style="left:75px;top:3px" width="8" height="5" viewBox="0 0 8 5"><path d="M1 4 L4 1 L7 4" fill="none" stroke="#c8d0d8" stroke-width="1.2"/></svg></div>
<div class="a" style="left:8px;top:215px;width:157px;height:561px;border:1px solid #1e82c8;border-right-color:#58a6e0;border-bottom:none;background:#fcfcfc"></div>
<div class="a ghdr" style="left:9px;top:216px;width:155px;height:22px"><span class="a" style="left:4px;top:4px;font-weight:bold;font-size:13px;color:#1a78b8;white-space:nowrap">Standard Controls</span></div>
<div class="a" style="left:9px;top:238px;width:155px;height:1px;background:#1e82c8"></div>
<div class="a hb" style="left:145px;top:219px"><svg class="a" style="left:3px;top:4px" width="10" height="7" viewBox="0 0 10 7"><path d="M1 6 L5 2 L9 6" fill="none" stroke="#1a6fb0" stroke-width="1.5"/></svg></div>
<div class="a" style="left:9px;top:239px;width:155px;height:537px;overflow:hidden">
<svg class="a" style="left:13px;top:10px" width="22" height="22" viewBox="0 0 22 22"><defs><linearGradient id="pg" x1="0" y1="0" x2="1" y2="1"><stop offset="0" stop-color="#c4ccd4"/><stop offset="1" stop-color="#4a545e"/></linearGradient></defs><path d="M6 1 L6 16.5 L9.5 13 L12.2 19.5 L14.8 18.3 L12.2 12 L17.5 12 Z" fill="url(#pg)" stroke="#5a646e" stroke-width="0.7"/></svg>
<div class="a tbi" style="left:50px;top:14px;text-decoration:underline;color:#2a8ed8;">Pointer</div>
<svg class="a" style="left:13px;top:42px" width="22" height="22" viewBox="0 0 22 22"><defs><linearGradient id="lg" x1="0" y1="0" x2="0" y2="1"><stop offset="0" stop-color="#7aa8ec"/><stop offset="1" stop-color="#2a5cc0"/></linearGradient></defs><text x="11" y="20.5" text-anchor="middle" font-family="Liberation Serif" font-weight="bold" font-size="25" fill="url(#lg)">A</text></svg>
<div class="a tbi" style="left:50px;top:46px;">Label</div>
<svg class="a" style="left:13px;top:74px" width="22" height="22" viewBox="0 0 22 22"><defs><linearGradient id="cbg" x1="0" y1="0" x2="1" y2="1"><stop offset="0" stop-color="#f4f6fa"/><stop offset="1" stop-color="#c8ced8"/></linearGradient></defs><rect x="1.5" y="1.5" width="19" height="19" rx="1" fill="#fff" stroke="#7a90b8"/><rect x="3" y="3" width="16" height="16" fill="url(#cbg)"/><path d="M5.5 10.5 L9.5 14.5 L16 7" fill="none" stroke="#2e62c8" stroke-width="2.6"/></svg>
<div class="a tbi" style="left:50px;top:78px;">Check Box</div>
<svg class="a" style="left:13px;top:106px" width="22" height="22" viewBox="0 0 22 22"><rect x="2.5" y="0.5" width="18" height="21" fill="#f8fafd" stroke="#7a98c8"/><text x="11.5" y="10.5" text-anchor="middle" font-family="Liberation Serif" font-weight="bold" font-size="12" fill="#e06a20">A</text><path d="M6 13.5 H17 M6 15.5 H17 M6 17.5 H17" stroke="#8aa0b8" stroke-width="0.9"/></svg>
<div class="a tbi" style="left:50px;top:110px;">Rich Text</div>
<svg class="a" style="left:13px;top:138px" width="22" height="22" viewBox="0 0 22 22"><defs><linearGradient id="pbg" x1="0" y1="0" x2="0" y2="1"><stop offset="0" stop-color="#e07a20"/><stop offset="0.65" stop-color="#fad060"/><stop offset="0.72" stop-color="#f09030"/><stop offset="1" stop-color="#e07020"/></linearGradient></defs><rect x="0.5" y="3.5" width="21" height="16" fill="#fff" stroke="#5a6478"/><rect x="2" y="5" width="18" height="13" fill="url(#pbg)"/><path d="M8.5 17.5 Q9.5 13 8 9" fill="none" stroke="#6a3a10" stroke-width="1.2"/><path d="M8 9 Q5 7.5 3 10 M8 9 Q6 6 3.5 6.5 M8 9 Q9 6 12 6.5 M8 9 Q11 8.5 12.5 11" fill="none" stroke="#7a4010" stroke-width="1.3"/></svg>
<div class="a tbi" style="left:50px;top:142px;">Picture Box</div>
<svg class="a" style="left:13px;top:170px" width="22" height="22" viewBox="0 0 22 22"><defs><linearGradient id="png" x1="0" y1="0" x2="1" y2="1"><stop offset="0" stop-color="#e0e4ea"/><stop offset="1" stop-color="#9aa2ae"/></linearGradient></defs><rect x="1.5" y="1.5" width="19" height="19" rx="2" fill="url(#png)" stroke="#7a828e"/><rect x="4.5" y="4.5" width="13" height="13" fill="#c4cad4" stroke="#e4e8ee" stroke-width="0.8"/></svg>
<div class="a tbi" style="left:50px;top:174px;">Panel</div>
<svg class="a" style="left:13px;top:202px" width="22" height="22" viewBox="0 0 22 22"><rect x="0.5" y="3.5" width="21" height="16" fill="#f8f8f8" stroke="#7a90b0"/><rect x="1" y="4" width="20" height="3.5" fill="#5a8ee0"/><path d="M1 11.5 H21 M1 15.5 H21 M7.5 4 V19 M14.5 4 V19" stroke="#9ab0cc"/></svg>
<div class="a tbi" style="left:50px;top:206px;">Table</div>
<svg class="a" style="left:13px;top:234px" width="22" height="22" viewBox="0 0 22 22"><path d="M2.5 2.5 L19.5 19.5" stroke="#555" stroke-width="1.2"/><rect x="1" y="1" width="3" height="3" fill="#fff" stroke="#666" stroke-width="0.8"/><rect x="18" y="18" width="3" height="3" fill="#fff" stroke="#666" stroke-width="0.8"/></svg>
<div class="a tbi" style="left:50px;top:238px;">Line</div>
<svg class="a" style="left:13px;top:266px" width="22" height="22" viewBox="0 0 22 22"><defs><linearGradient id="shg" x1="0" y1="0" x2="1" y2="1"><stop offset="0" stop-color="#b8e850"/><stop offset="1" stop-color="#60b020"/></linearGradient><radialGradient id="shc" cx="0.35" cy="0.35" r="0.7"><stop offset="0" stop-color="#d0e4fc"/><stop offset="1" stop-color="#6a9ee0"/></radialGradient></defs><rect x="1.5" y="1.5" width="11" height="11" fill="url(#shg)" stroke="#58a020" stroke-width="0.8"/><circle cx="14" cy="14" r="6.5" fill="url(#shc)" stroke="#4a78c0" stroke-width="0.9"/></svg>
<div class="a tbi" style="left:50px;top:270px;">Shape</div>
<svg class="a" style="left:13px;top:298px" width="22" height="22" viewBox="0 0 22 22"><defs><linearGradient id="bcg" x1="0" y1="0" x2="1" y2="1"><stop offset="0" stop-color="#ffffff"/><stop offset="1" stop-color="#dde4ee"/></linearGradient></defs><rect x="0.5" y="1.5" width="21" height="19" fill="url(#bcg)" stroke="#7a98c8"/><path d="M4.5 5 V15 M6.5 5 V15 M8 5 V15 M10.5 5 V15 M12 5 V15 M14 5 V15 M15.5 5 V15 M17.5 5 V15" stroke="#444" stroke-width="0.9"/><path d="M4 17 H18" stroke="#888" stroke-dasharray="1 1"/></svg>
<div class="a tbi" style="left:50px;top:302px;">Bar Code</div>
<svg class="a" style="left:13px;top:330px" width="22" height="22" viewBox="0 0 22 22"><defs><linearGradient id="zcg" x1="0" y1="0" x2="1" y2="1"><stop offset="0" stop-color="#ffffff"/><stop offset="1" stop-color="#dde4ee"/></linearGradient></defs><rect x="0.5" y="1.5" width="21" height="19" fill="url(#zcg)" stroke="#7a98c8"/><path d="M4 5 H9 V16 H4 Z M4 10.5 H9" fill="none" stroke="#3a70d0" stroke-width="1.4"/><path d="M12 5 H17 V16 H12 Z M12 10.5 H17" fill="none" stroke="#3a70d0" stroke-width="1.4"/><path d="M4 5 H9 M12 5 H17" stroke="#a8b8d0" stroke-width="1.4"/></svg>
<div class="a tbi" style="left:50px;top:334px;">Zip Code</div>
<svg class="a" style="left:13px;top:362px" width="22" height="22" viewBox="0 0 22 22"><rect x="1" y="12" width="5" height="8" fill="#70b040" stroke="#408020" stroke-width="0.6"/><rect x="8" y="2" width="5" height="18" fill="#f08020" stroke="#b05010" stroke-width="0.6"/><rect x="15" y="7" width="5" height="13" fill="#5090e0" stroke="#3060a0" stroke-width="0.6"/></svg>
<div class="a tbi" style="left:50px;top:366px;">Chart</div>
<svg class="a" style="left:13px;top:394px" width="22" height="22" viewBox="0 0 22 22"><defs><linearGradient id="pvg" x1="0" y1="0" x2="1" y2="1"><stop offset="0" stop-color="#ffffff"/><stop offset="1" stop-color="#d8e0ea"/></linearGradient></defs><rect x="1.5" y="0.5" width="20" height="19.5" rx="1.5" fill="url(#pvg)" stroke="#8aa0c0"/><path d="M7 4.5 H16 V6.5 M7 4.5 L11 10 L7 15.5 H16 V13.5" fill="none" stroke="#d85a18" stroke-width="2"/></svg>
<div class="a tbi" style="left:50px;top:398px;">Pivot Grid</div>
<svg class="a" style="left:13px;top:426px" width="22" height="22" viewBox="0 0 22 22"><rect x="1.5" y="0.5" width="13" height="17" fill="#fbfbfb" stroke="#8a9ab0"/><path d="M4 4 H12 M4 7 H12 M4 10 H9" stroke="#9aa8b8"/><rect x="9.5" y="9.5" width="12" height="12" rx="1" fill="#5a90d8" stroke="#3060a0"/><text x="13.5" y="20" font-family="Liberation Serif" font-weight="bold" font-size="10" fill="#fff">i</text></svg>
<div class="a tbi" style="left:50px;top:430px;">Page Info</div>
<svg class="a" style="left:13px;top:458px" width="22" height="22" viewBox="0 0 22 22"><rect x="4.5" y="-2" width="13" height="9.5" fill="#fbfbfb" stroke="#8a9ab8"/><path d="M6.5 2 H15.5 M6.5 4.5 H15.5" stroke="#9aa8b8"/><rect x="4.5" y="14.5" width="13" height="9" fill="#fbfbfb" stroke="#8a9ab8"/><path d="M6.5 17 H15.5 M6.5 19.5 H15.5" stroke="#9aa8b8"/><path d="M0 8 L3 11 L0 14 Z M22 8 L19 11 L22 14 Z" fill="#50a020"/></svg>
<div class="a tbi" style="left:50px;top:462px;">Page Break</div>
<svg class="a" style="left:13px;top:490px" width="22" height="22" viewBox="0 0 22 22"><defs><linearGradient id="cbl" x1="0" y1="0" x2="0" y2="1"><stop offset="0" stop-color="#a0c4f4"/><stop offset="1" stop-color="#4a80d0"/></linearGradient></defs><path d="M11 3 V6 M11 9.5 V12.5 M11 16 V19" stroke="#666"/><rect x="0.5" y="5.5" width="21" height="4" rx="1" fill="url(#cbl)" stroke="#3a6ab0"/><rect x="0.5" y="12.5" width="21" height="4" rx="1" fill="url(#cbl)" stroke="#3a6ab0"/><rect x="9.5" y="0.5" width="3" height="3" fill="#fff" stroke="#666" stroke-width="0.8"/><rect x="9.5" y="18.5" width="3" height="3" fill="#fff" stroke="#666" stroke-width="0.8"/></svg>
<div class="a tbi" style="left:50px;top:494px;">Cross-band Line</div>
<svg class="a" style="left:13px;top:522px" width="22" height="22" viewBox="0 0 22 22"><path d="M3 2 H19 M3 2 V22 M19 2 V22" stroke="#555" fill="none"/><rect x="1.5" y="0.5" width="3" height="3" fill="#fff" stroke="#555" stroke-width="0.8"/><rect x="17.5" y="0.5" width="3" height="3" fill="#fff" stroke="#555" stroke-width="0.8"/><rect x="0.5" y="5.5" width="21" height="4" rx="1" fill="url(#cbl)" stroke="#3a6ab0"/><rect x="0.5" y="12.5" width="21" height="4" rx="1" fill="url(#cbl)" stroke="#3a6ab0"/></svg>
<div class="a tbi" style="left:50px;top:526px;">Cross-band Box</div>
</div>
<div class="a sbtn" style="left:7px;top:776px;width:158px;height:13px;border-color:#1e82c8"><svg class="a" style="left:75px;top:3px" width="8" height="5" viewBox="0 0 8 5"><path d="M1 1 L4 4 L7 1" fill="none" stroke="#1a6fb0" stroke-width="1.3"/></svg></div>
<div class="a pnl" style="left:170px;top:177px;width:694px;height:454px;background:#fff"></div>
<div class="a" style="left:171px;top:178px;width:22px;height:22px;background:linear-gradient(#fefefe,#f2f2f2 60%,#e0e0e0)"></div>
<div class="a" style="left:177px;top:184px;width:12px;height:11px;border:1px solid #1e82c8;background:#fff"><svg class="a" style="left:2px;top:1px" width="7" height="7" viewBox="0 0 7 7"><path d="M1.5 1 L4.5 3.5 L1.5 6" fill="none" stroke="#1a6fb0" stroke-width="1.5"/></svg></div>
<div class="a" style="left:193px;top:178px;width:1px;height:428px;background:#1e82c8"></div>
<div class="a" style="left:194px;top:178px;width:669px;height:22px;background:linear-gradient(#fdfdfd 0,#f6f6f6 5px,#e0e0e0 17px,#d4d4d4 22px)"></div>
<div class="a" style="left:224px;top:183px;width:639px;height:12px;background:#f6f6f6;border-top:1px solid #d0d0d0;border-bottom:1px solid #d8d8d8"></div>
<div class="a" style="left:224px;top:183px;width:97px;height:12px;background:#d2d2d2"></div>
<div class="a" style="left:171px;top:200px;width:692px;height:1px;background:#1e82c8"></div>
<div class="a rlab" style="left:221px;top:183px">1</div><div class="a" style="left:237px;top:188px;width:1px;height:2px;background:#1a6a9a"></div><div class="a" style="left:249px;top:188px;width:1px;height:2px;background:#1a6a9a"></div><div class="a" style="left:261px;top:188px;width:1px;height:2px;background:#1a6a9a"></div><div class="a" style="left:273px;top:185px;width:1px;height:8px;background:#1a78b8"></div><div class="a" style="left:285px;top:188px;width:1px;height:2px;background:#1a6a9a"></div><div class="a" style="left:297px;top:188px;width:1px;height:2px;background:#1a6a9a"></div><div class="a" style="left:309px;top:188px;width:1px;height:2px;background:#1a6a9a"></div><div class="a" style="left:333px;top:188px;width:1px;height:2px;background:#1a6a9a"></div><div class="a" style="left:345px;top:188px;width:1px;height:2px;background:#1a6a9a"></div><div class="a" style="left:357px;top:188px;width:1px;height:2px;background:#1a6a9a"></div><div class="a" style="left:369px;top:185px;width:1px;height:8px;background:#1a78b8"></div><div class="a" style="left:381px;top:188px;width:1px;height:2px;background:#1a6a9a"></div><div class="a" style="left:393px;top:188px;width:1px;height:2px;background:#1a6a9a"></div><div class="a" style="left:405px;top:188px;width:1px;height:2px;background:#1a6a9a"></div><div class="a rlab" style="left:413px;top:183px">1</div><div class="a" style="left:429px;top:188px;width:1px;height:2px;background:#1a6a9a"></div><div class="a" style="left:441px;top:188px;width:1px;height:2px;background:#1a6a9a"></div><div class="a" style="left:453px;top:188px;width:1px;height:2px;background:#1a6a9a"></div><div class="a" style="left:465px;top:185px;width:1px;height:8px;background:#1a78b8"></div><div class="a" style="left:477px;top:188px;width:1px;height:2px;background:#1a6a9a"></div><div class="a" style="left:489px;top:188px;width:1px;height:2px;background:#1a6a9a"></div><div class="a" style="left:501px;top:188px;width:1px;height:2px;background:#1a6a9a"></div><div class="a rlab" style="left:509px;top:183px">2</div><div class="a" style="left:525px;top:188px;width:1px;height:2px;background:#1a6a9a"></div><div class="a" style="left:537px;top:188px;width:1px;height:2px;background:#1a6a9a"></div><div class="a" style="left:549px;top:188px;width:1px;height:2px;background:#1a6a9a"></div><div class="a" style="left:561px;top:185px;width:1px;height:8px;background:#1a78b8"></div><div class="a" style="left:573px;top:188px;width:1px;height:2px;background:#1a6a9a"></div><div class="a" style="left:585px;top:188px;width:1px;height:2px;background:#1a6a9a"></div><div class="a" style="left:597px;top:188px;width:1px;height:2px;background:#1a6a9a"></div><div class="a rlab" style="left:605px;top:183px">3</div><div class="a" style="left:621px;top:188px;width:1px;height:2px;background:#1a6a9a"></div><div class="a" style="left:633px;top:188px;width:1px;height:2px;background:#1a6a9a"></div><div class="a" style="left:645px;top:188px;width:1px;height:2px;background:#1a6a9a"></div><div class="a" style="left:657px;top:185px;width:1px;height:8px;background:#1a78b8"></div><div class="a" style="left:669px;top:188px;width:1px;height:2px;background:#1a6a9a"></div><div class="a" style="left:681px;top:188px;width:1px;height:2px;background:#1a6a9a"></div><div class="a" style="left:693px;top:188px;width:1px;height:2px;background:#1a6a9a"></div><div class="a rlab" style="left:701px;top:183px">4</div><div class="a" style="left:717px;top:188px;width:1px;height:2px;background:#1a6a9a"></div><div class="a" style="left:729px;top:188px;width:1px;height:2px;background:#1a6a9a"></div><div class="a" style="left:741px;top:188px;width:1px;height:2px;background:#1a6a9a"></div><div class="a" style="left:753px;top:185px;width:1px;height:8px;background:#1a78b8"></div><div class="a" style="left:765px;top:188px;width:1px;height:2px;background:#1a6a9a"></div><div class="a" style="left:777px;top:188px;width:1px;height:2px;background:#1a6a9a"></div><div class="a" style="left:789px;top:188px;width:1px;height:2px;background:#1a6a9a"></div><div class="a rlab" style="left:797px;top:183px">5</div><div class="a" style="left:813px;top:188px;width:1px;height:2px;background:#1a6a9a"></div><div class="a" style="left:825px;top:188px;width:1px;height:2px;background:#1a6a9a"></div><div class="a" style="left:837px;top:188px;width:1px;height:2px;background:#1a6a9a"></div><div class="a" style="left:849px;top:185px;width:1px;height:8px;background:#1a78b8"></div><div class="a" style="left:861px;top:188px;width:1px;height:2px;background:#1a6a9a"></div>
<div class="a" style="left:171px;top:201px;width:22px;height:405px;background:linear-gradient(90deg,#fefefe,#f2f2f2 40%,#dadada 85%,#cfcfcf)"></div>
<div class="a" style="left:194px;top:201px;width:670px;height:405px;background:#9d9d9d"></div>
<div class="a" style="left:171px;top:606px;width:692px;height:24px;background:#f4f4f4;border-top:1px solid #1e82c8"></div>
<div class="a sstrip" style="left:173px;top:608px;width:565px;height:21px"><span class="a mono" style="left:4px;top:4px">looksieReport1 { PaperKind:Letter }</span></div>
<div class="a sstrip" style="left:740px;top:608px;width:121px;height:21px"><span class="a mono" style="left:4px;top:4px">Zoom Factor: 100%</span></div>
<div class="a pnl" style="left:170px;top:633px;width:694px;height:158px;background:#f0f0f0"></div>
<div class="a phdr" style="left:171px;top:634px;width:692px;height:22px"><span class="a ptitle" style="left:5px;top:4px">Group and Sort</span></div>
<div class="a hb" style="left:825px;top:636px"><svg class="a" style="left:2px;top:2px" width="12" height="12" viewBox="0 0 12 12"><path d="M4 1.5 H8 V6.5 M4 1.5 V6.5 M2.5 7 H9.5 M6 7.5 V11" fill="none" stroke="#1a6fb0" stroke-width="1.3"/><path d="M7 1.5 V6.5" stroke="#1a6fb0" stroke-width="1.3"/></svg></div>
<div class="a hb" style="left:844px;top:636px"><svg class="a" style="left:3px;top:3px" width="10" height="10" viewBox="0 0 10 10"><path d="M1.5 1.5 L8.5 8.5 M8.5 1.5 L1.5 8.5" stroke="#1a6fb0" stroke-width="2.2"/></svg></div>
<div class="a" style="left:171px;top:655px;width:692px;height:1px;background:#1e82c8"></div>
<div class="a gstb" style="left:172px;top:657px;width:690px;height:26px"></div>
<svg class="a" style="left:178px;top:662px" width="16" height="16" viewBox="0 0 16 16"><path d="M0.5 10 V15.5 H3 M13 0.5 H15.5 V3" fill="none" stroke="#222"/><rect x="1.5" y="1.5" width="9" height="9" rx="1.5" fill="#8ab0e8" stroke="#4070b8"/><rect x="5.5" y="5.5" width="9" height="9" rx="1.5" fill="#70c850" stroke="#3a8a20"/></svg>
<span class="a monob" style="left:198px;top:665px">Add a Group</span>
<svg class="a" style="left:272px;top:662px" width="16" height="16" viewBox="0 0 16 16"><path d="M1 1 H9 L5 10 Z" fill="#70c850" stroke="#3a8a20" stroke-width="0.8"/><path d="M9 5 L15 15 H3 Z" fill="#9ac0f0" stroke="#3a6ab0" stroke-width="0.9"/></svg>
<span class="a monob" style="left:291px;top:665px">Add a Sort</span>
<svg class="a" style="left:361px;top:662px" width="15" height="15" viewBox="0 0 15 15"><path d="M2 2 L13 13 M13 2 L2 13" stroke="#f0b0b0" stroke-width="2"/></svg>
<span class="a monob" style="left:380px;top:665px;color:#a8a8a8">Delete</span>
<div class="a" style="left:424px;top:661px;width:1px;height:19px;background:#d4d4d4"></div>
<svg class="a" style="left:432px;top:662px" width="15" height="15" viewBox="0 0 15 15"><circle cx="7.5" cy="7.5" r="6.5" fill="#d8ead8" stroke="#b8d4b8"/><path d="M7.5 11 V5 M5 7 L7.5 4.5 L10 7" fill="none" stroke="#fff" stroke-width="1.5"/></svg>
<span class="a monob" style="left:451px;top:665px;color:#a8a8a8">Move Up</span>
<svg class="a" style="left:502px;top:662px" width="15" height="15" viewBox="0 0 15 15"><circle cx="7.5" cy="7.5" r="6.5" fill="#d8ead8" stroke="#b8d4b8"/><path d="M7.5 4 V10 M5 8 L7.5 10.5 L10 8" fill="none" stroke="#fff" stroke-width="1.5"/></svg>
<span class="a monob" style="left:521px;top:665px;color:#a8a8a8">Move Down</span>
<div class="a" style="left:172px;top:684px;width:690px;height:83px;background:#fff;border:1px solid #c8c8c8;border-top:none"></div>
<div class="a gcol" style="left:174px;top:685px;width:228px;height:21px;border-left:1px solid #2a88cc;"><span class="a" style="left:3px;top:3px">Field Name</span></div>
<div class="a gcol" style="left:402px;top:685px;width:91px;height:21px;"><span class="a" style="left:3px;top:3px">Sort Order</span></div>
<div class="a gcol" style="left:493px;top:685px;width:92px;height:21px;"><span class="a" style="left:3px;top:3px">Show Header</span></div>
<div class="a gcol" style="left:585px;top:685px;width:92px;height:21px;"><span class="a" style="left:3px;top:3px">Show Footer</span></div>
<div class="a gcol" style="left:677px;top:685px;width:183px;height:21px;"><span class="a" style="left:3px;top:3px"></span></div>
<div class="a" style="left:171px;top:766px;width:692px;height:1px;background:#1e82c8"></div>
<div class="a btab act" style="left:175px;top:766px;width:112px;height:22px"></div>
<svg class="a" style="left:180px;top:769px" width="16" height="16" viewBox="0 0 16 16"><rect x="0.5" y="0.5" width="10" height="10" rx="1" fill="#9ac0f0" stroke="#3a6ab0"/><path d="M3 5 H15 L9 15 Z" fill="#70c850" stroke="#3a8a20" stroke-width="0.9"/></svg>
<span class="a" style="left:198px;top:771px">Group and Sort</span>
<div class="a btab" style="left:289px;top:766px;width:99px;height:21px"></div>
<svg class="a" style="left:294px;top:769px" width="16" height="16" viewBox="0 0 16 16"><rect x="0.5" y="0.5" width="11" height="13" fill="#f0f4fa" stroke="#6a8ab8"/><text x="2" y="10" font-family="Liberation Sans" font-size="8" fill="#2a60c0">{}</text><circle cx="11" cy="11" r="4.5" fill="#e04040" stroke="#a02020" stroke-width="0.6"/><path d="M9 9 L13 13 M13 9 L9 13" stroke="#fff" stroke-width="1.3"/></svg>
<span class="a" style="left:312px;top:771px;letter-spacing:-0.2px">Scripts Errors</span>
<div class="a pnl" style="left:866px;top:177px;width:248px;height:304px;background:#f0f0f0"></div>
<div class="a phdr" style="left:867px;top:178px;width:246px;height:22px"><span class="a ptitle" style="left:5px;top:4px">Report Explorer</span></div>
<div class="a hb" style="left:1056px;top:180px"><svg class="a" style="left:3px;top:3px" width="11" height="10" viewBox="0 0 11 10"><rect x="0.5" y="0.5" width="10" height="9" fill="none" stroke="#1a6fb0" stroke-width="1"/><rect x="0.5" y="0.5" width="10" height="2.5" fill="#1a6fb0"/></svg></div>
<div class="a hb" style="left:1075px;top:180px"><svg class="a" style="left:2px;top:2px" width="12" height="12" viewBox="0 0 12 12"><path d="M4 1.5 H8 V6.5 M4 1.5 V6.5 M2.5 7 H9.5 M6 7.5 V11" fill="none" stroke="#1a6fb0" stroke-width="1.3"/><path d="M7 1.5 V6.5" stroke="#1a6fb0" stroke-width="1.3"/></svg></div>
<div class="a hb" style="left:1094px;top:180px"><svg class="a" style="left:3px;top:3px" width="10" height="10" viewBox="0 0 10 10"><path d="M1.5 1.5 L8.5 8.5 M8.5 1.5 L1.5 8.5" stroke="#1a6fb0" stroke-width="2.2"/></svg></div>
<div class="a" style="left:867px;top:199px;width:246px;height:1px;background:#1e82c8"></div>
<div class="a" style="left:868px;top:201px;width:244px;height:256px;background:#fff;border:1px solid #c0c0c0"></div>
<div class="a" style="left:880px;top:212px;width:10px;height:1px;border-top:1px dotted #000"></div>
<svg class="a" style="left:889px;top:203px" width="16" height="17" viewBox="0 0 16 17"><rect x="0.5" y="2.5" width="10" height="13" fill="#e8eef6" stroke="#6a8ab8"/><rect x="3" y="0.5" width="5" height="3" fill="#c8d8ec" stroke="#6a8ab8" stroke-width="0.8"/><rect x="6" y="7" width="9" height="3.5" fill="#f08030" stroke="#c05010" stroke-width="0.6"/><rect x="6" y="12" width="9" height="3.5" fill="#70c040" stroke="#409020" stroke-width="0.6"/></svg>
<div class="a" style="left:905px;top:203px;width:205px;height:19px;background:#7b96de"></div>
<span class="a" style="left:907px;top:205px;color:#fff">looksieReport1</span>
<div class="a btab act" style="left:871px;top:457px;width:114px;height:22px"></div>
<svg class="a" style="left:875px;top:460px" width="17" height="17" viewBox="0 0 17 17"><rect x="0.5" y="2.5" width="10" height="12" fill="#e0e6ee" stroke="#6a7a98"/><rect x="3" y="0.5" width="5" height="3" fill="#c8d0dc" stroke="#6a7a98" stroke-width="0.8"/><circle cx="12" cy="11" r="4.5" fill="#f0a040"/><rect x="6" y="9" width="7" height="7" fill="#70c040" stroke="#408020" stroke-width="0.6"/></svg>
<span class="a" style="left:894px;top:462px">Report Explorer</span>
<div class="a btab" style="left:986px;top:457px;width:74px;height:21px;background:linear-gradient(#f4f4f4,#e0e0e0)"></div>
<svg class="a" style="left:990px;top:459px" width="17" height="17" viewBox="0 0 17 17"><path d="M0.5 3 Q0.5 0.5 5 0.5 Q9.5 0.5 9.5 3 V13 Q9.5 15.5 5 15.5 Q0.5 15.5 0.5 13 Z" fill="#f0c060" stroke="#b08030"/><rect x="6.5" y="7.5" width="10" height="4" fill="#d8e6f8" stroke="#4a7ab8"/><rect x="6.5" y="12" width="10" height="4" fill="#d8e6f8" stroke="#4a7ab8"/></svg>
<span class="a" style="left:1009px;top:462px;letter-spacing:-0.2px">Field List</span>
<div class="a pnl" style="left:866px;top:484px;width:248px;height:307px;background:#f0f0f0"></div>
<div class="a phdr" style="left:867px;top:485px;width:246px;height:22px"><span class="a ptitle" style="left:5px;top:4px">Property Grid</span></div>
<div class="a hb" style="left:1056px;top:487px"><svg class="a" style="left:3px;top:3px" width="11" height="10" viewBox="0 0 11 10"><rect x="0.5" y="0.5" width="10" height="9" fill="none" stroke="#1a6fb0" stroke-width="1"/><rect x="0.5" y="0.5" width="10" height="2.5" fill="#1a6fb0"/></svg></div>
<div class="a hb" style="left:1075px;top:487px"><svg class="a" style="left:2px;top:2px" width="12" height="12" viewBox="0 0 12 12"><path d="M4 1.5 H8 V6.5 M4 1.5 V6.5 M2.5 7 H9.5 M6 7.5 V11" fill="none" stroke="#1a6fb0" stroke-width="1.3"/><path d="M7 1.5 V6.5" stroke="#1a6fb0" stroke-width="1.3"/></svg></div>
<div class="a hb" style="left:1094px;top:487px"><svg class="a" style="left:3px;top:3px" width="10" height="10" viewBox="0 0 10 10"><path d="M1.5 1.5 L8.5 8.5 M8.5 1.5 L1.5 8.5" stroke="#1a6fb0" stroke-width="2.2"/></svg></div>
<div class="a" style="left:867px;top:506px;width:246px;height:1px;background:#1e82c8"></div>
<div class="a" style="left:868px;top:508px;width:244px;height:20px;background:#fff;border:1px solid #c0c0c0"><span class="a monob" style="left:2px;top:2px;color:#000;font-size:12px;letter-spacing:-0.3px">looksieReport1&nbsp;&nbsp;&nbsp;Report</span></div>
<div class="a ddb" style="left:1096px;top:510px;width:14px;height:15px"><svg class="a" style="left:2px;top:4px" width="8" height="5" viewBox="0 0 8 5"><path d="M0.7 0.7 L4 4 L7.3 0.7" fill="none" stroke="#2273b0" stroke-width="1.6"/></svg></div>
<div class="a gstb" style="left:869px;top:529px;width:242px;height:24px"></div>
<svg class="a" style="left:871px;top:531px" width="22" height="20" viewBox="0 0 22 20"><rect x="0.5" y="0.5" width="21" height="19" fill="#fbfbfb" stroke="#c4c4c4"/>
<rect x="3.3" y="2.3" width="6.4" height="6.4" rx="1.6" fill="#f4f4f4" stroke="#2a84f8" stroke-width="1.1"/><path d="M4.6 5.5 H8.4 M6.5 3.6 V7.4" stroke="#000" stroke-width="1.4"/>
<rect x="3.3" y="11.3" width="6.4" height="6.4" rx="1.6" fill="#f4f4f4" stroke="#2a84f8" stroke-width="1.1"/><path d="M4.6 14.5 H8.4 M6.5 12.6 V16.4" stroke="#000" stroke-width="1.4"/>
<path d="M11 4.3 H15 M11 13.3 H15" stroke="#111" stroke-width="1.2"/>
<path d="M11 6.5 H14.5 M16 6.5 H19 M11 8.5 H14.5 M16 8.5 H19 M11 10.5 H14.5 M16 10.5 H19 M11 15.5 H14.5 M16 15.5 H19 M11 17.5 H14.5 M16 17.5 H19" stroke="#808080" stroke-width="0.9"/></svg>
<svg class="a" style="left:897px;top:532px" width="18" height="18" viewBox="0 0 18 18"><text x="1.5" y="8" font-family="Liberation Sans" font-weight="bold" font-size="10" fill="#2a6ae0">A</text><text x="1.8" y="17" font-family="Liberation Sans" font-weight="bold" font-size="10" fill="#a81818">Z</text><path d="M13.5 1 V12" stroke="#000" stroke-width="1.3"/><path d="M11 10 L13.5 16.5 L16 10 Z" fill="#000"/></svg>
<div class="a" style="left:868px;top:553px;width:224px;height:178px;background:#f0f0f0;border:1px solid #c8c8c8;border-top:1px solid #1e82c8;overflow:hidden">
<span class="a" style="left:19px;top:6px;font-weight:bold;font-size:13px;color:#1a78c0">Appearance</span>
<div class="a hb" style="left:199px;top:5px;width:16px;height:15px"><svg class="a" style="left:3px;top:3px" width="10" height="7" viewBox="0 0 10 7"><path d="M1 6 L5 2 L9 6" fill="none" stroke="#1a6fb0" stroke-width="1.5"/></svg></div>
<div class="a" style="left:16px;top:22px;width:206px;height:20px;border-top:1px solid #e2e2e2;background:#fff"></div>
<div class="a" style="left:16px;top:23px;width:97px;height:19px;background:#f8f8f8;border-right:1px solid #e2e2e2"></div>
<span class="a" style="left:31px;top:25px;width:81px;overflow:hidden;white-space:nowrap">Background Cc</span>
<div class="a" style="left:118px;top:27px;width:23px;height:11px;border:1px solid #000;background:#fff"></div>
<span class="a" style="left:144px;top:25px;white-space:nowrap">Transparent</span>
<div class="a" style="left:16px;top:42px;width:206px;height:20px;border-top:1px solid #e2e2e2;background:#fff"></div>
<div class="a" style="left:16px;top:43px;width:97px;height:19px;background:#f8f8f8;border-right:1px solid #e2e2e2"></div>
<span class="a" style="left:31px;top:45px;width:81px;overflow:hidden;white-space:nowrap">Border Color</span>
<div class="a" style="left:118px;top:47px;width:23px;height:11px;border:1px solid #000;background:#000"></div>
<span class="a" style="left:144px;top:45px;white-space:nowrap">ControlText</span>
<div class="a" style="left:16px;top:62px;width:206px;height:18px;border-top:1px solid #e2e2e2;background:#fff"></div>
<div class="a" style="left:16px;top:63px;width:97px;height:17px;background:#f8f8f8;border-right:1px solid #e2e2e2"></div>
<span class="a" style="left:31px;top:65px;width:81px;overflow:hidden;white-space:nowrap">Border Width</span>
<span class="a" style="left:117px;top:65px;white-space:nowrap">1</span>
<div class="a" style="left:16px;top:80px;width:206px;height:20px;border-top:1px solid #e2e2e2;background:#fff"></div>
<div class="a" style="left:16px;top:81px;width:97px;height:19px;background:#f8f8f8;border-right:1px solid #e2e2e2"></div>
<span class="a" style="left:31px;top:83px;width:81px;overflow:hidden;white-space:nowrap">Borders</span>
<span class="a" style="left:117px;top:83px;white-space:nowrap">None</span>
<div class="a" style="left:16px;top:100px;width:206px;height:20px;border-top:1px solid #e2e2e2;background:#fff"></div>
<div class="a" style="left:16px;top:101px;width:97px;height:19px;background:#f8f8f8;border-right:1px solid #e2e2e2"></div>
<span class="a" style="left:31px;top:103px;width:81px;overflow:hidden;white-space:nowrap">Font</span>
<span class="a" style="left:117px;top:103px;white-space:nowrap">Times New Rom...</span>
<div class="a" style="left:17px;top:105px;width:11px;height:11px;border:1px solid #2a88cc;border-radius:1px;background:#fff"><svg class="a" style="left:1px;top:1px" width="7" height="7" viewBox="0 0 7 7"><path d="M0.5 3.5 H6.5 M3.5 0.5 V6.5" stroke="#1a6fb0" stroke-width="1.2"/></svg></div>
<div class="a" style="left:16px;top:120px;width:206px;height:20px;border-top:1px solid #e2e2e2;background:#fff"></div>
<div class="a" style="left:16px;top:121px;width:97px;height:19px;background:#f8f8f8;border-right:1px solid #e2e2e2"></div>
<span class="a" style="left:31px;top:123px;width:81px;overflow:hidden;white-space:nowrap">Foreground Cc</span>
<div class="a" style="left:118px;top:125px;width:23px;height:11px;border:1px solid #000;background:#000"></div>
<span class="a" style="left:144px;top:123px;white-space:nowrap">ControlText</span>
<div class="a" style="left:16px;top:140px;width:206px;height:20px;border-top:1px solid #e2e2e2;background:#fff"></div>
<div class="a" style="left:16px;top:141px;width:97px;height:19px;background:#f8f8f8;border-right:1px solid #e2e2e2"></div>
<span class="a" style="left:31px;top:143px;width:81px;overflow:hidden;white-space:nowrap">Formatting Rul</span>
<span class="a" style="left:117px;top:143px;white-space:nowrap">(Collection)</span>
<div class="a" style="left:16px;top:160px;width:206px;height:20px;border-top:1px solid #e2e2e2;background:#fff"></div>
<div class="a" style="left:16px;top:161px;width:97px;height:19px;background:#f8f8f8;border-right:1px solid #e2e2e2"></div>
<span class="a" style="left:31px;top:163px;width:81px;overflow:hidden;white-space:nowrap">Formatting Rul</span>
<span class="a" style="left:117px;top:163px;white-space:nowrap">(Collection)</span>
</div>
<div class="a" style="left:1092px;top:554px;width:18px;height:177px;background:#fff;border:1px solid #2a88cc"></div>
<div class="a hb" style="left:1093px;top:556px;width:17px;height:16px"><svg class="a" style="left:3px;top:4px" width="10" height="7" viewBox="0 0 10 7"><path d="M1 6 L5 2 L9 6" fill="none" stroke="#1a6fb0" stroke-width="1.5"/></svg></div>
<div class="a hb" style="left:1093px;top:574px;width:17px;height:14px"><svg class="a" style="left:4px;top:3px" width="8" height="7" viewBox="0 0 8 7"><path d="M1 1 H7 M1 3.5 H7 M1 6 H7" stroke="#1a6fb0" stroke-width="1"/></svg></div>
<div class="a hb" style="left:1093px;top:714px;width:17px;height:16px"><svg class="a" style="left:3px;top:4px" width="10" height="7" viewBox="0 0 10 7"><path d="M1 1 L5 5 L9 1" fill="none" stroke="#1a6fb0" stroke-width="1.5"/></svg></div>
<div class="a" style="left:868px;top:731px;width:244px;height:7px;background:linear-gradient(#f4f4f4,#e0e0e0)"></div>
<div class="a" style="left:983px;top:735px;width:2px;height:2px;background:#a0a0a0"></div><div class="a" style="left:989px;top:735px;width:2px;height:2px;background:#a0a0a0"></div><div class="a" style="left:995px;top:735px;width:2px;height:2px;background:#a0a0a0"></div>
<div class="a" style="left:868px;top:739px;width:244px;height:50px;background:#fcfcfc;border:1px solid #d0d0d0;border-radius:2px"></div><div id="status" class="a">
<svg class="a" style="left:1094px;top:8px" width="14" height="13" viewBox="0 0 14 13"><g fill="#1a6fb8"><rect x="10" y="2" width="2" height="2"/><rect x="6" y="6" width="2" height="2"/><rect x="10" y="6" width="2" height="2"/><rect x="2" y="10" width="2" height="2"/><rect x="6" y="10" width="2" height="2"/><rect x="10" y="10" width="2" height="2"/></g></svg>
</div>

</body></html>
